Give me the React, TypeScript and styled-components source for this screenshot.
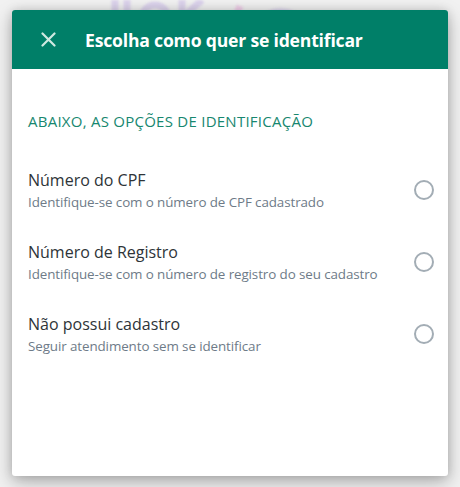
import styled, { createGlobalStyle } from "styled-components";

const GlobalStyle = createGlobalStyle`
    html, body {
        margin: 0;
        padding: 0;
        background-color: #F1F1F1;
        font-family: "Open Sans", "Noto Sans", sans-serif;
    }
`;

const Page = styled.div`
    position: relative;
    width: 460px;
    height: 487px;
    overflow: hidden;
`;

const BackLogo = styled.svg`
    display: block;
    margin-left: 100px;
    filter: blur(1px);
`;

const Dialog = styled.div`
    position: absolute;
    top: 10px;
    left: 12px;
    width: 436px;
    height: 466px;
    background-color: #FFFFFF;
    border-radius: 3px;
    box-shadow: 0 6px 18px rgba(0, 0, 0, 0.28), 0 0 10px rgba(0, 0, 0, 0.12);
    overflow: hidden;
    display: flex;
    flex-direction: column;
`;

const Header = styled.div`
    display: flex;
    align-items: center;
    height: 59px;
    padding-left: 29px;
    gap: 29px;
    background-color: #007F68;
    color: #FFFFFF;
`;

const CloseButton = styled.button`
    display: flex;
    padding: 0;
    border: none;
    background: none;
    cursor: pointer;
`;

const Title = styled.h2`
    margin: 0;
    font-size: 17.6px;
    font-weight: 700;
    letter-spacing: -0.2px;
`;

const Body = styled.div`
    display: flex;
    flex-direction: column;
    padding: 42px 14px 0 16px;
`;

const Section = styled.p`
    margin: 0 0 38px 0;
    font-size: 15px;
    line-height: 20px;
    color: #17876F;
    letter-spacing: 0.25px;
`;

const OptionList = styled.div`
    display: flex;
    flex-direction: column;
    gap: 28px;
`;

const Option = styled.label`
    display: flex;
    align-items: center;
    justify-content: space-between;
    cursor: pointer;
`;

const OptionText = styled.div`
    display: flex;
    flex-direction: column;
`;

const OptionTitle = styled.span`
    font-size: 16px;
    line-height: 22px;
    color: #2E3438;
`;

const OptionHint = styled.span`
    font-size: 13.4px;
    line-height: 22px;
    color: #6E7B88;
    letter-spacing: -0.1px;
`;

const Radio = styled.span`
    width: 16px;
    height: 16px;
    border: 2px solid #A3ADB5;
    border-radius: 50%;
    margin-bottom: 3px;
`;

const options = [
    { title: "Número do CPF", hint: "Identifique-se com o número de CPF cadastrado" },
    { title: "Número de Registro", hint: "Identifique-se com o número de registro do seu cadastro" },
    { title: "Não possui cadastro", hint: "Seguir atendimento sem se identificar" },
];

export default function App() {
    return (
        <Page>
            <GlobalStyle />
            <BackLogo width="220" height="30" viewBox="0 0 220 30">
                <g fill="none" stroke="#DCD3EC" strokeWidth="7">
                    <line x1="15" y1="0" x2="15" y2="30" />
                    <line x1="27" y1="0" x2="27" y2="30" />
                    <circle cx="55" cy="18" r="13" />
                    <line x1="82" y1="0" x2="82" y2="30" />
                    <line x1="82" y1="18" x2="102" y2="0" />
                    <path d="M160 24 C165 10, 185 8, 200 18" />
                </g>
                <line x1="140" y1="6" x2="130" y2="30" stroke="#EFCDE8" strokeWidth="7" />
            </BackLogo>
            <Dialog>
                <Header>
                    <CloseButton aria-label="Fechar">
                        <svg width="15" height="15" viewBox="0 0 15 15">
                            <path d="M1.5 1.5 L13.5 13.5 M13.5 1.5 L1.5 13.5" stroke="#CFE9E1" strokeWidth="2.2" strokeLinecap="round" />
                        </svg>
                    </CloseButton>
                    <Title>Escolha como quer se identificar</Title>
                </Header>
                <Body>
                    <Section>ABAIXO, AS OPÇÕES DE IDENTIFICAÇÃO</Section>
                    <OptionList>
                        {options.map((o) => (
                            <Option key={o.title}>
                                <OptionText>
                                    <OptionTitle>{o.title}</OptionTitle>
                                    <OptionHint>{o.hint}</OptionHint>
                                </OptionText>
                                <Radio />
                            </Option>
                        ))}
                    </OptionList>
                </Body>
            </Dialog>
        </Page>
    );
}
